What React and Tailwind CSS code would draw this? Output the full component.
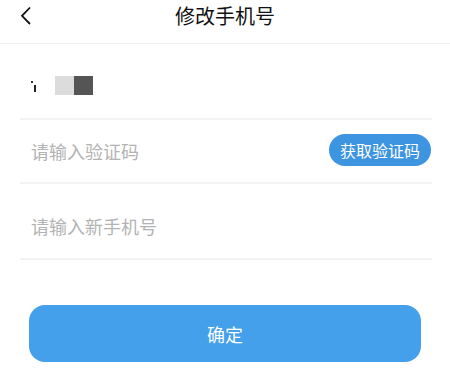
export default function App() {
  return (
    <div className="w-[450px] h-[377px] bg-white overflow-hidden" style={{ fontFamily: '"Noto Sans CJK SC", "Noto Sans", sans-serif' }}>
      <div className="relative h-[44px] border-b border-[#f1f1f1] flex items-center justify-center">
        <svg className="absolute left-[19px] top-[6px]" width="14" height="20" viewBox="0 0 14 20" fill="none">
          <path d="M11 1.5 L3 9.8 L11 18" stroke="#111" strokeWidth="1.8" />
        </svg>
        <span className="text-[20px] leading-none text-[#111] -mt-[12px]">修改手机号</span>
      </div>
      <div className="ml-[20px] mr-[18px]">
        <div className="h-[76px] border-b-2 border-[#f3f3f3] flex items-center pl-[11px] pt-[9px]">
          <div className="flex items-center">
            <div className="relative w-[6px] h-[14px] mr-[18px]">
              <div className="absolute left-[0px] top-[2px] w-[2px] h-[2px] bg-[#333]" />
              <div className="absolute left-[3px] top-[6px] w-[2px] h-[7px] bg-[#222]" />
            </div>
            <div className="w-[19px] h-[19px] bg-[#dcdcdc]" />
            <div className="w-[19px] h-[19px] bg-[#555555]" />
          </div>
        </div>
        <div className="h-[64px] border-b-2 border-[#f3f3f3] flex items-center justify-between pl-[11px]">
          <span className="text-[18px] leading-none text-[#b3b3b3]">请输入验证码</span>
          <button className="w-[102px] h-[32px] rounded-full bg-[#3d94e0] text-white text-[16px] leading-none flex items-center justify-center -mt-[2px] mr-[1px]">获取验证码</button>
        </div>
        <div className="h-[76px] border-b-2 border-[#f3f3f3] flex items-center pl-[11px] pt-[10px]">
          <span className="text-[18px] leading-none text-[#b3b3b3]">请输入新手机号</span>
        </div>
      </div>
      <div className="mt-[45px] ml-[29px] w-[392px] h-[57px] rounded-[16px] bg-[#44a0ea] flex items-center justify-center">
        <span className="text-white text-[18px] leading-none">确定</span>
      </div>
    </div>
  );
}
